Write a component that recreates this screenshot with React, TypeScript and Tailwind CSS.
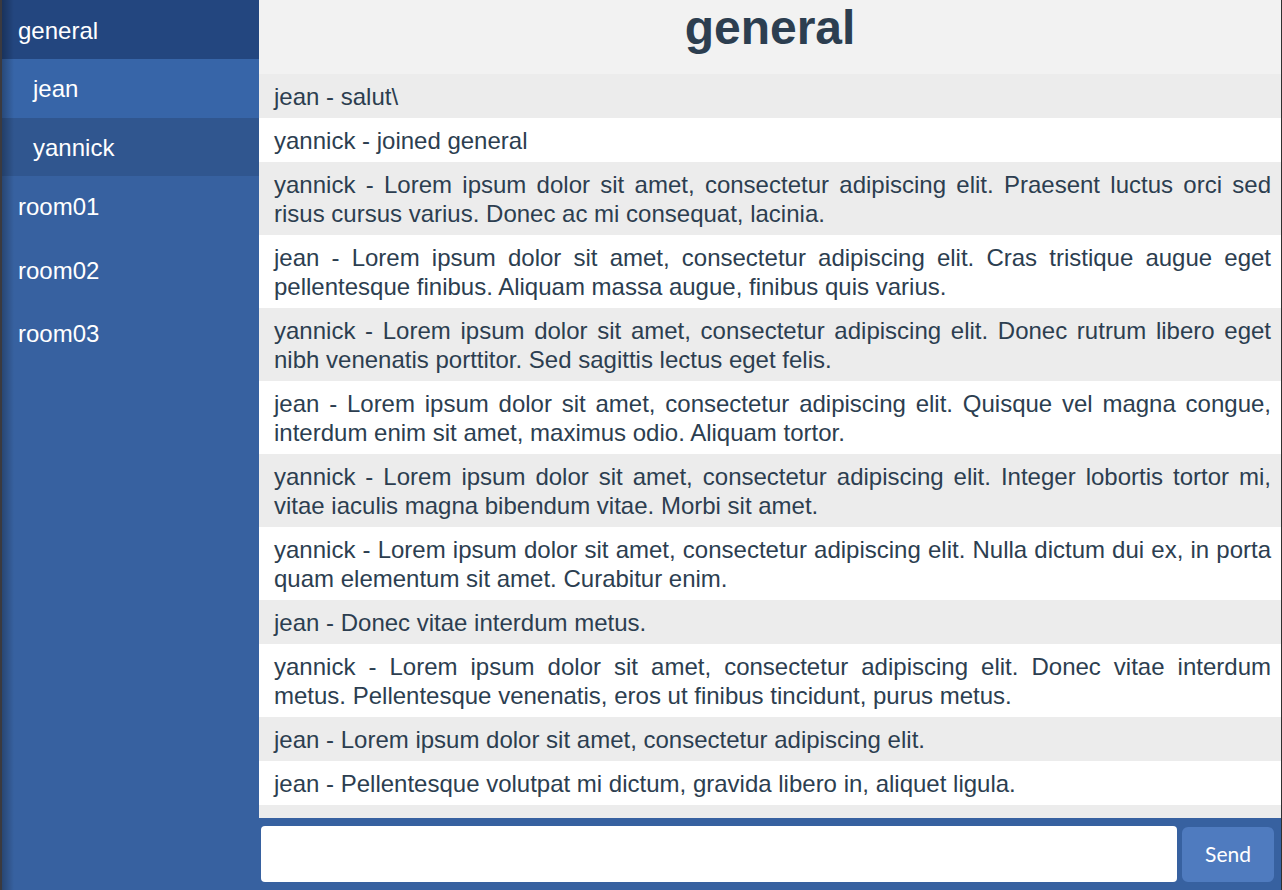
import React from "react";

const messages: string[] = [
  "jean - salut\\",
  "yannick - joined general",
  "yannick - Lorem ipsum dolor sit amet, consectetur adipiscing elit. Praesent luctus orci sed risus cursus varius. Donec ac mi consequat, lacinia.",
  "jean - Lorem ipsum dolor sit amet, consectetur adipiscing elit. Cras tristique augue eget pellentesque finibus. Aliquam massa augue, finibus quis varius.",
  "yannick - Lorem ipsum dolor sit amet, consectetur adipiscing elit. Donec rutrum libero eget nibh venenatis porttitor. Sed sagittis lectus eget felis.",
  "jean - Lorem ipsum dolor sit amet, consectetur adipiscing elit. Quisque vel magna congue, interdum enim sit amet, maximus odio. Aliquam tortor.",
  "yannick - Lorem ipsum dolor sit amet, consectetur adipiscing elit. Integer lobortis tortor mi, vitae iaculis magna bibendum vitae. Morbi sit amet.",
  "yannick - Lorem ipsum dolor sit amet, consectetur adipiscing elit. Nulla dictum dui ex, in porta quam elementum sit amet. Curabitur enim.",
  "jean - Donec vitae interdum metus.",
  "yannick - Lorem ipsum dolor sit amet, consectetur adipiscing elit. Donec vitae interdum metus. Pellentesque venenatis, eros ut finibus tincidunt, purus metus.",
  "jean - Lorem ipsum dolor sit amet, consectetur adipiscing elit.",
  "jean - Pellentesque volutpat mi dictum, gravida libero in, aliquet ligula.",
];

export default function App() {
  return (
    <div
      className="flex h-[890px] w-full overflow-hidden border-l-2 border-r border-l-[#3b3a3f] border-r-[#303030] text-[24px]"
      style={{ fontFamily: '"Liberation Sans", Arial, Helvetica, sans-serif' }}
    >
      <aside className="relative flex w-[257px] shrink-0 flex-col bg-[#3761a0] text-white">
        <ul>
          <li>
            <div className="bg-[#23467f] pt-[16.5px] pb-[13.5px] pl-4 leading-[28.8px]">general</div>
            <ul>
              <li className="bg-[#3765a8] pt-[16.5px] pb-[13.5px] pl-[31px] leading-[28.8px]">jean</li>
              <li className="bg-[#30568f] pt-[16.5px] pb-[13.5px] pl-[31px] leading-[28.8px]">yannick</li>
            </ul>
          </li>
          <li className="pt-[17px] pb-[17.5px] pl-4 leading-[28.8px]">room01</li>
          <li className="pt-[17px] pb-[17.5px] pl-4 leading-[28.8px]">room02</li>
          <li className="pt-[17px] pb-[17.5px] pl-4 leading-[28.8px]">room03</li>
        </ul>
        <div className="pointer-events-none absolute inset-y-0 left-0 w-[12px] bg-gradient-to-r from-[rgba(0,0,0,0.28)] to-transparent" />
      </aside>
      <main className="flex min-w-0 flex-1 flex-col text-[#2c3e50]">
        <header className="h-[74px] shrink-0 bg-[#f2f2f2]">
          <h1 className="text-center text-[48px] font-bold leading-[56px]">general</h1>
        </header>
        <div className="flex-1 overflow-hidden bg-[#ececec]">
          {messages.map((m, i) => (
            <div
              key={i}
              className={
                (i % 2 === 0 ? "bg-[#ececec] " : "bg-white ") +
                "py-[7.5px] pl-[15px] pr-[10px] text-justify leading-[29px]"
              }
            >
              {m}
            </div>
          ))}
        </div>
        <div className="flex h-[72px] shrink-0 items-center gap-[5px] bg-[#3761a0] pl-[2px] pr-[7px]">
          <input
            type="text"
            className="h-[56px] flex-1 rounded-[4px] border-0 bg-white px-3 text-[20px] outline-none"
          />
          <button
            className="h-[55px] w-[92px] rounded-[6px] bg-[#4f7bbf] text-[21px] text-white"
            style={{ fontFamily: 'Lato, "Open Sans", sans-serif' }}
          >
            Send
          </button>
        </div>
      </main>
    </div>
  );
}
